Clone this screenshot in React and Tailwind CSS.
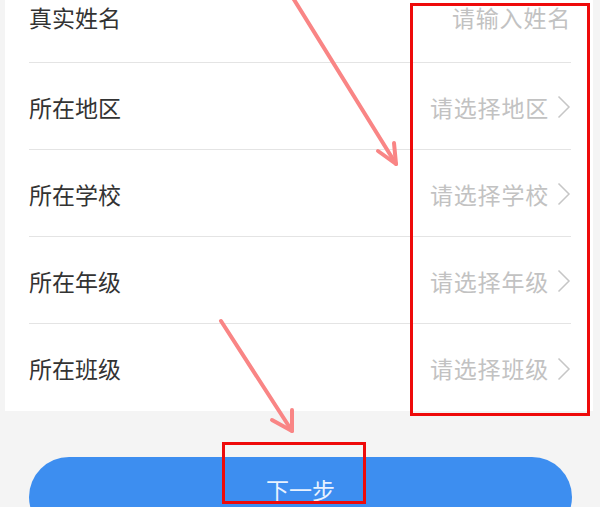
import React from "react";

const rows = [
  { label: "真实姓名", hint: "请输入姓名", arrow: false },
  { label: "所在地区", hint: "请选择地区", arrow: true },
  { label: "所在学校", hint: "请选择学校", arrow: true },
  { label: "所在年级", hint: "请选择年级", arrow: true },
  { label: "所在班级", hint: "请选择班级", arrow: true },
];

const Chevron = () => (
  <svg width="14" height="24" viewBox="0 0 14 24" className="ml-[8px] shrink-0">
    <path d="M1.5 1.5 L12 12 L1.5 22.5" fill="none" stroke="#c6c6c6" strokeWidth="1.5" />
  </svg>
);

const App = () => {
  return (
    <div
      className="relative w-[600px] h-[507px] overflow-hidden bg-[#f4f4f4]"
      style={{ fontFamily: '"Noto Sans CJK SC", "Noto Sans", sans-serif' }}
    >
      {/* form card */}
      <div className="ml-[5px] w-[588px] bg-white pl-[24px] pr-[22px] -mt-[24px]">
        {rows.map((r, i) => (
          <div
            key={r.label}
            className={
              "flex items-center justify-between h-[87px] " +
              (i < rows.length - 1 ? "border-b border-[#e4e4e4]" : "")
            }
          >
            <span className={"text-[23px] text-[#333333] " + (i === 0 ? "-mt-[4px]" : "pt-[2px]")}>
              {r.label}
            </span>
            <div className={"flex items-center " + (i === 0 ? "-mt-[4px]" : "pt-[2px]")}>
              <span className="text-[23px] text-[#c2c2c2] tracking-[0.8px]">{r.hint}</span>
              {r.arrow && <Chevron />}
            </div>
          </div>
        ))}
      </div>

      {/* next button */}
      <div className="ml-[29px] mt-[46px] w-[543px] h-[80px] rounded-full bg-[#3d8ef0] flex justify-center pt-[15px]">
        <span className="text-[23px] text-[#e8f2ff]">下一步</span>
      </div>

      {/* annotation marks */}
      <div className="absolute left-[410px] top-[3px] w-[180px] h-[413px] border-[3px] border-[#ee0a0a]" />
      <div className="absolute left-[222px] top-[442px] w-[144px] h-[62px] border-[3px] border-[#ee0a0a]" />
      <svg className="absolute left-0 top-0" width="600" height="507" viewBox="0 0 600 507">
        <g fill="none" stroke="#f98585" strokeWidth="4" strokeLinecap="round" strokeLinejoin="round">
          <path d="M293 -2 L396 164" />
          <path d="M378 151 L396 164 L394 143" />
          <path d="M221 321 L292 431" />
          <path d="M272 420 L292 431 L292 410" />
        </g>
      </svg>
    </div>
  );
};

export default App;
